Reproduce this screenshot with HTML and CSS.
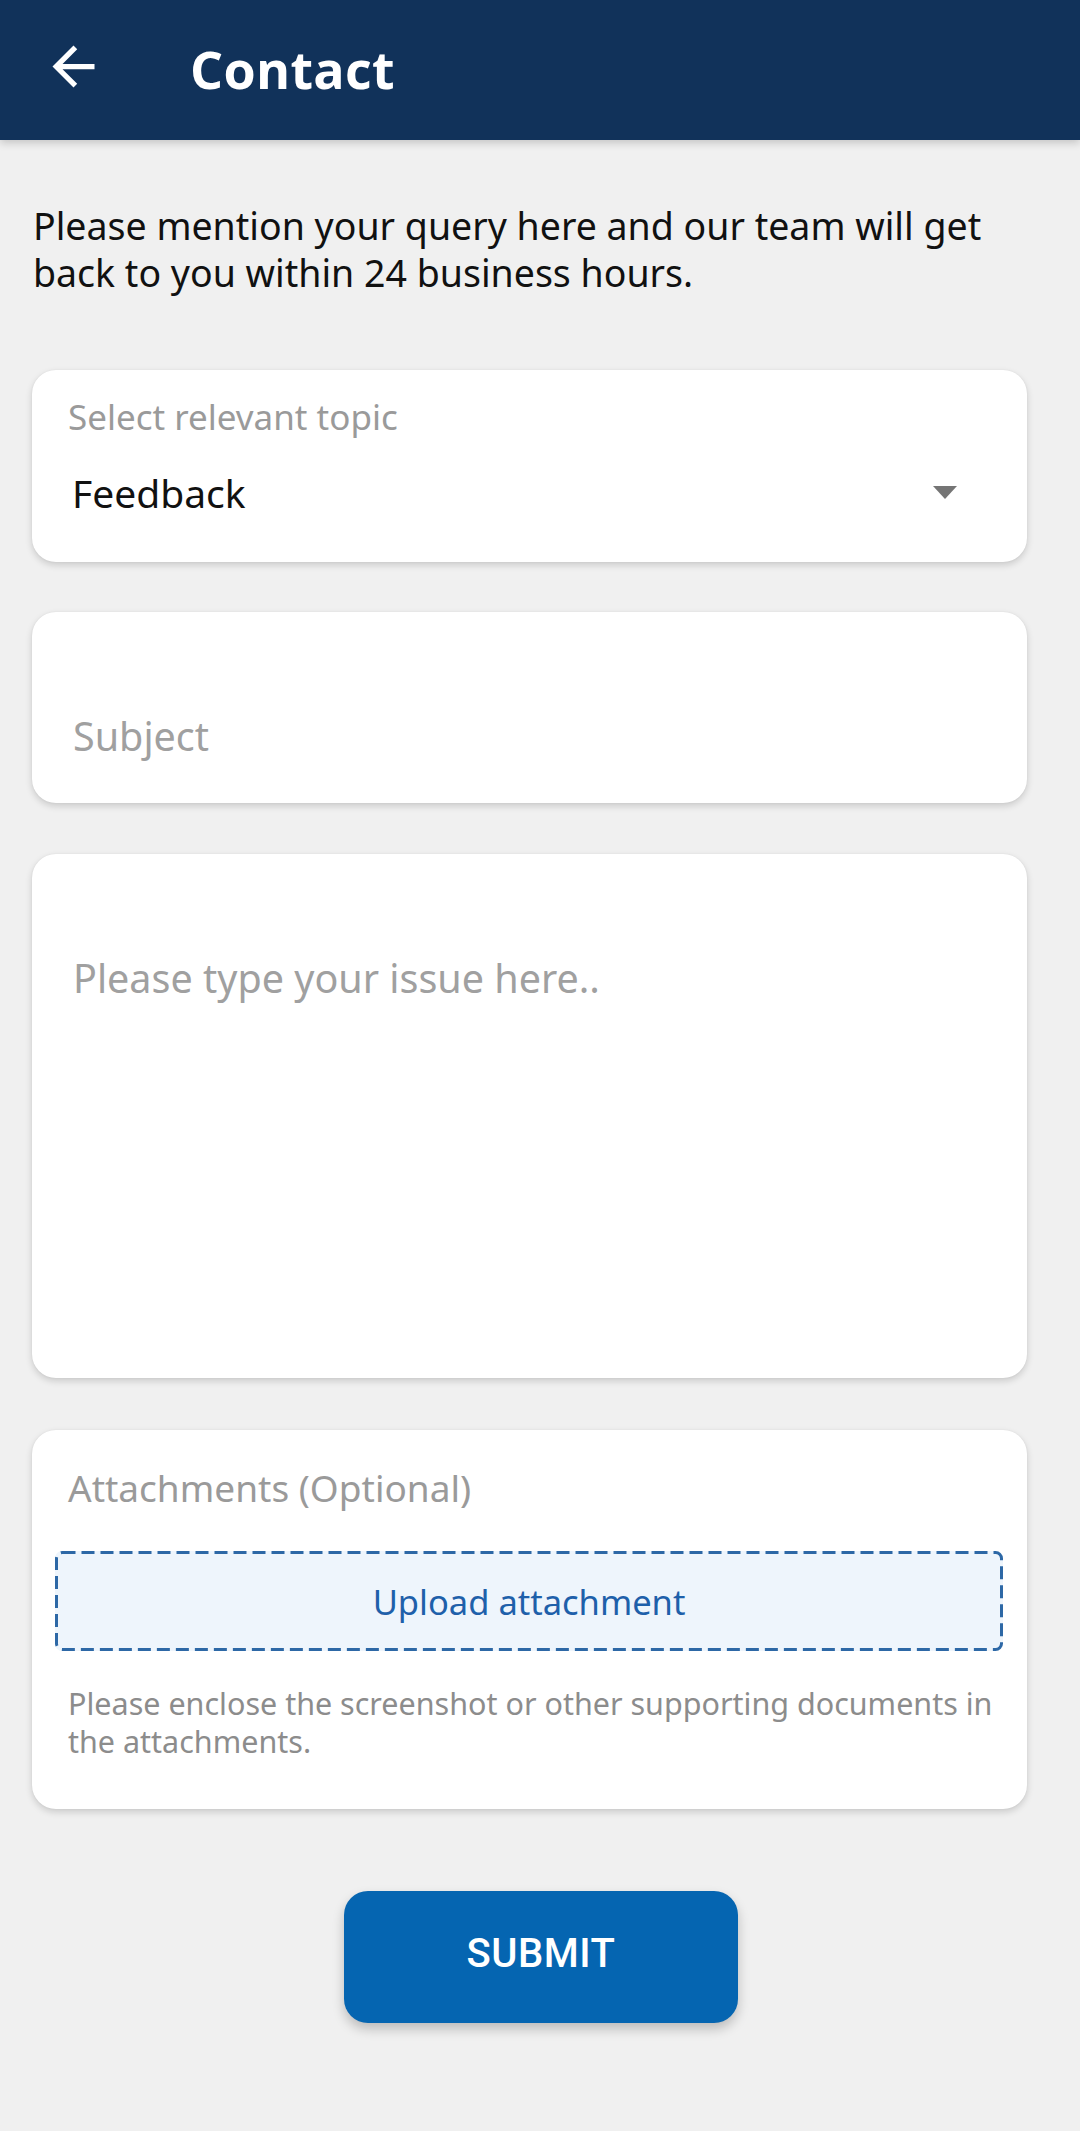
FILE: index.html
```html
<!DOCTYPE html>
<html lang="en">
<head>
<meta charset="utf-8">
<title>Contact</title>
<link rel="stylesheet" href="styles.css">
</head>
<body>
<header class="appbar">
  <svg class="back" viewBox="0 0 24 24" aria-hidden="true"><path d="M20 11H7.83l5.59-5.59L12 4l-8 8 8 8 1.41-1.41L7.83 13H20v-2z" fill="#fff"/></svg>
  <h1 class="title">Contact</h1>
</header>
<main class="content">
  <p class="intro">Please mention your query here and our team will get back to you within 24 business hours.</p>
  <section class="card card-select">
    <div class="label">Select relevant topic</div>
    <div class="select-row">
      <span class="value">Feedback</span>
      <span class="caret"></span>
    </div>
  </section>
  <section class="card card-subject">
    <div class="placeholder">Subject</div>
  </section>
  <section class="card card-issue">
    <div class="placeholder">Please type your issue here..</div>
  </section>
  <section class="card card-attach">
    <div class="attach-label">Attachments (Optional)</div>
    <div class="upload">
      <svg class="dash" viewBox="0 0 948 100" preserveAspectRatio="none" aria-hidden="true"><rect x="1.5" y="1.5" width="945" height="97" rx="6" ry="6" fill="none" stroke="#2d68a6" stroke-width="3" stroke-dasharray="13 6"/></svg>
      <span class="upload-text">Upload attachment</span>
    </div>
    <p class="helper">Please enclose the screenshot or other supporting documents in the attachments.</p>
  </section>
</main>
<div class="actions">
  <button class="submit" type="button">SUBMIT</button>
</div>
</body>
</html>
```
FILE: styles.css
```css
* { box-sizing: border-box; }
html, body { margin: 0; padding: 0; }
body {
  background: #f0f0f0;
  font-family: "Noto Sans", Roboto, sans-serif;
  color: #111;
  width: 1080px;
  min-height: 2131px;
}
.appbar {
  height: 140px;
  background: #11325a;
  display: flex;
  align-items: center;
  box-shadow: 0 3px 8px rgba(0,0,0,0.18);
  position: relative;
  z-index: 1;
}
.back {
  width: 63px;
  height: 63px;
  margin-left: 42px;
  margin-bottom: 8px;
  flex: none;
}
.title {
  margin: 0 0 4px 85px;
  font-family: "Open Sans", "Noto Sans", sans-serif;
  font-weight: 700;
  font-size: 52px;
  color: #fff;
  letter-spacing: 0.3px;
}
.content {
  padding: 62px 53px 0 32px;
}
.intro {
  margin: 0 0 74px 1px;
  font-size: 37.5px;
  line-height: 47px;
  max-width: 990px;
  color: #111;
}
.card {
  background: #fff;
  border-radius: 24px;
  box-shadow: 0 3px 7px rgba(0,0,0,0.16), 0 0 2px rgba(0,0,0,0.06);
}
.card + .card { margin-top: 50px; }
.card-select {
  height: 192px;
  padding: 27px 70px 0 36px;
}
.label {
  font-size: 35px;
  line-height: 40px;
  color: #9a9a9a;
}
.select-row {
  margin-top: 33px;
  display: flex;
  align-items: center;
  justify-content: space-between;
  padding-left: 4px;
}
.value {
  font-size: 39px;
  line-height: 46px;
  color: #111;
}
.caret {
  width: 0;
  height: 0;
  border-left: 12.5px solid transparent;
  border-right: 12.5px solid transparent;
  border-top: 13px solid #757575;
  margin-bottom: 2px;
}
.card-subject {
  height: 191px;
  padding: 101px 40px 0 41px;
}
.card-issue {
  height: 524px;
  padding: 101px 40px 0 41px;
  margin-top: 51px !important;
}
.placeholder {
  font-size: 39.5px;
  line-height: 46px;
  color: #a0a0a0;
}
.card-attach {
  padding: 36px 24px 49px 23px;
  margin-top: 52px !important;
}
.attach-label {
  font-size: 37px;
  line-height: 44px;
  color: #9a9a9a;
  padding-left: 13px;
}
.upload {
  position: relative;
  margin-top: 41px;
  height: 100px;
  background: #eef5fc;
  border-radius: 7px;
  display: flex;
  align-items: center;
  justify-content: center;
}
.dash {
  position: absolute;
  inset: 0;
  width: 100%;
  height: 100%;
}
.upload-text {
  font-size: 34.5px;
  color: #1e60aa;
  position: relative;
}
.helper {
  margin: 33px -16px 0 13px;
  font-size: 30.5px;
  line-height: 38px;
  color: #8c8c8c;
}
.actions {
  display: flex;
  justify-content: center;
  margin-top: 82px;
  padding-left: 2px;
}
.submit {
  width: 394px;
  height: 132px;
  border: none;
  border-radius: 24px;
  background: #0565b1;
  color: #fff;
  font-family: Roboto, "Noto Sans", sans-serif;
  font-weight: 500;
  font-size: 40px;
  letter-spacing: 0.5px;
  box-shadow: 0 6px 12px rgba(0,0,0,0.22);
  padding: 0 0 8px;
}
```
